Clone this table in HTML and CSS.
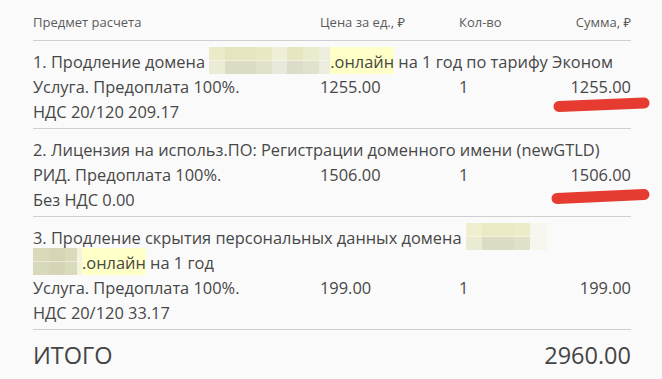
FILE: index.html
```html
<!DOCTYPE html>
<html lang="ru">
<head>
<meta charset="utf-8">
<title>Чек</title>
<link rel="stylesheet" href="styles.css">
</head>
<body>
<div class="receipt">
  <div class="head">
    <div>Предмет расчета</div>
    <div>Цена за ед., ₽</div>
    <div>Кол-во</div>
    <div class="right">Сумма, ₽</div>
  </div>

  <div class="item">
    <div class="title">1. Продление домена <span class="blur blur-a"></span><span class="hl">.онлайн</span> на 1 год по тарифу Эконом</div>
    <div class="details">
      <div>Услуга. Предоплата 100%.</div>
      <div>1255.00</div>
      <div>1</div>
      <div class="right">1255.00</div>
    </div>
    <div>НДС 20/120 209.17</div>
  </div>

  <div class="item">
    <div class="title">2. Лицензия на использ.ПО: Регистрации доменного имени (newGTLD)</div>
    <div class="details">
      <div>РИД. Предоплата 100%.</div>
      <div>1506.00</div>
      <div>1</div>
      <div class="right">1506.00</div>
    </div>
    <div>Без НДС 0.00</div>
  </div>

  <div class="item">
    <div class="title">3. Продление скрытия персональных данных домена <span class="blur blur-b"></span><br><span class="blur blur-c"></span><span class="hl">.онлайн</span> на 1 год</div>
    <div class="details">
      <div>Услуга. Предоплата 100%.</div>
      <div>199.00</div>
      <div>1</div>
      <div class="right">199.00</div>
    </div>
    <div>НДС 20/120 33.17</div>
  </div>

  <div class="total">
    <div>ИТОГО</div>
    <div>2960.00</div>
  </div>

  <svg class="marks" width="662" height="379" viewBox="0 0 662 379">
    <path d="M559 106.5 L644 103" stroke="#e53b31" stroke-width="11" stroke-linecap="round" fill="none"/>
    <path d="M557 198.5 L644 194.5" stroke="#e53b31" stroke-width="11" stroke-linecap="round" fill="none"/>
  </svg>
</div>
</body>
</html>
```

FILE: styles.css
```css
html, body {
  margin: 0;
  padding: 0;
  background: #fafafa;
}

.receipt {
  position: relative;
  box-sizing: border-box;
  width: 662px;
  height: 379px;
  padding: 0 31px 0 33px;
  font-family: "Open Sans", "Noto Sans", sans-serif;
  color: #474747;
  overflow: hidden;
}

.head {
  display: grid;
  grid-template-columns: 287px 139px 1fr auto;
  font-size: 13px;
  line-height: 18px;
  color: #5a5a5a;
  padding: 13px 0 9px;
  border-bottom: 1px solid #cfcfcf;
}

.right {
  text-align: right;
}

.item {
  font-size: 16.4px;
  line-height: 25px;
  padding: 8px 0 4px;
  border-bottom: 1px solid #cfcfcf;
}

.details {
  display: grid;
  grid-template-columns: 287px 139px 1fr auto;
}

.blur {
  display: inline-block;
  vertical-align: top;
  height: 27px;
  margin-top: -2px;
  background-repeat: no-repeat;
  background-size: 100% 50%;
  background-position: top, bottom;
}

.blur-a {
  width: 121px;
  background-image:
    linear-gradient(to right, #ebebc9 0 16px, #e5e5bf 16px 47px, #e8e8c2 47px 63px, #efefd7 63px 78px, #e6e6c1 78px 94px, #ebebcd 94px 110px, #eeeede 110px),
    linear-gradient(to right, #ebebd6 0 16px, #dcdcc5 16px 47px, #e2e2ca 47px 63px, #e8e8dc 63px 78px, #dcdcc8 78px 94px, #e1e1cd 94px 110px, #ececdf 110px);
}

.blur-b {
  width: 81px;
  background-image:
    linear-gradient(to right, #efefcf 0 16px, #eaeac5 16px 48px, #ececc8 48px 64px, #f6f6ef 64px),
    linear-gradient(to right, #ebebd4 0 16px, #dcdcc4 16px 48px, #e1e1ca 48px 64px, #f6f6ef 64px);
}

.blur-c {
  width: 49px;
  background-image:
    linear-gradient(to right, #dadabb 0 16px, #d6d6b6 16px 32px, #dbdbbc 32px 44px, #f4f4dc 44px),
    linear-gradient(to right, #d8d8ba 0 16px, #d5d5b6 16px 32px, #dadabc 32px 44px, #f4f4dc 44px);
}

.hl {
  display: inline-block;
  vertical-align: top;
  height: 27px;
  line-height: 25px;
  padding-top: 2px;
  margin-top: -2px;
  box-sizing: border-box;
  background: #ffffc8;
}

.total {
  display: flex;
  justify-content: space-between;
  font-size: 23.5px;
  line-height: 30px;
  padding-top: 10px;
  color: #444;
}

.marks {
  position: absolute;
  top: 0;
  left: 0;
  pointer-events: none;
}
```
